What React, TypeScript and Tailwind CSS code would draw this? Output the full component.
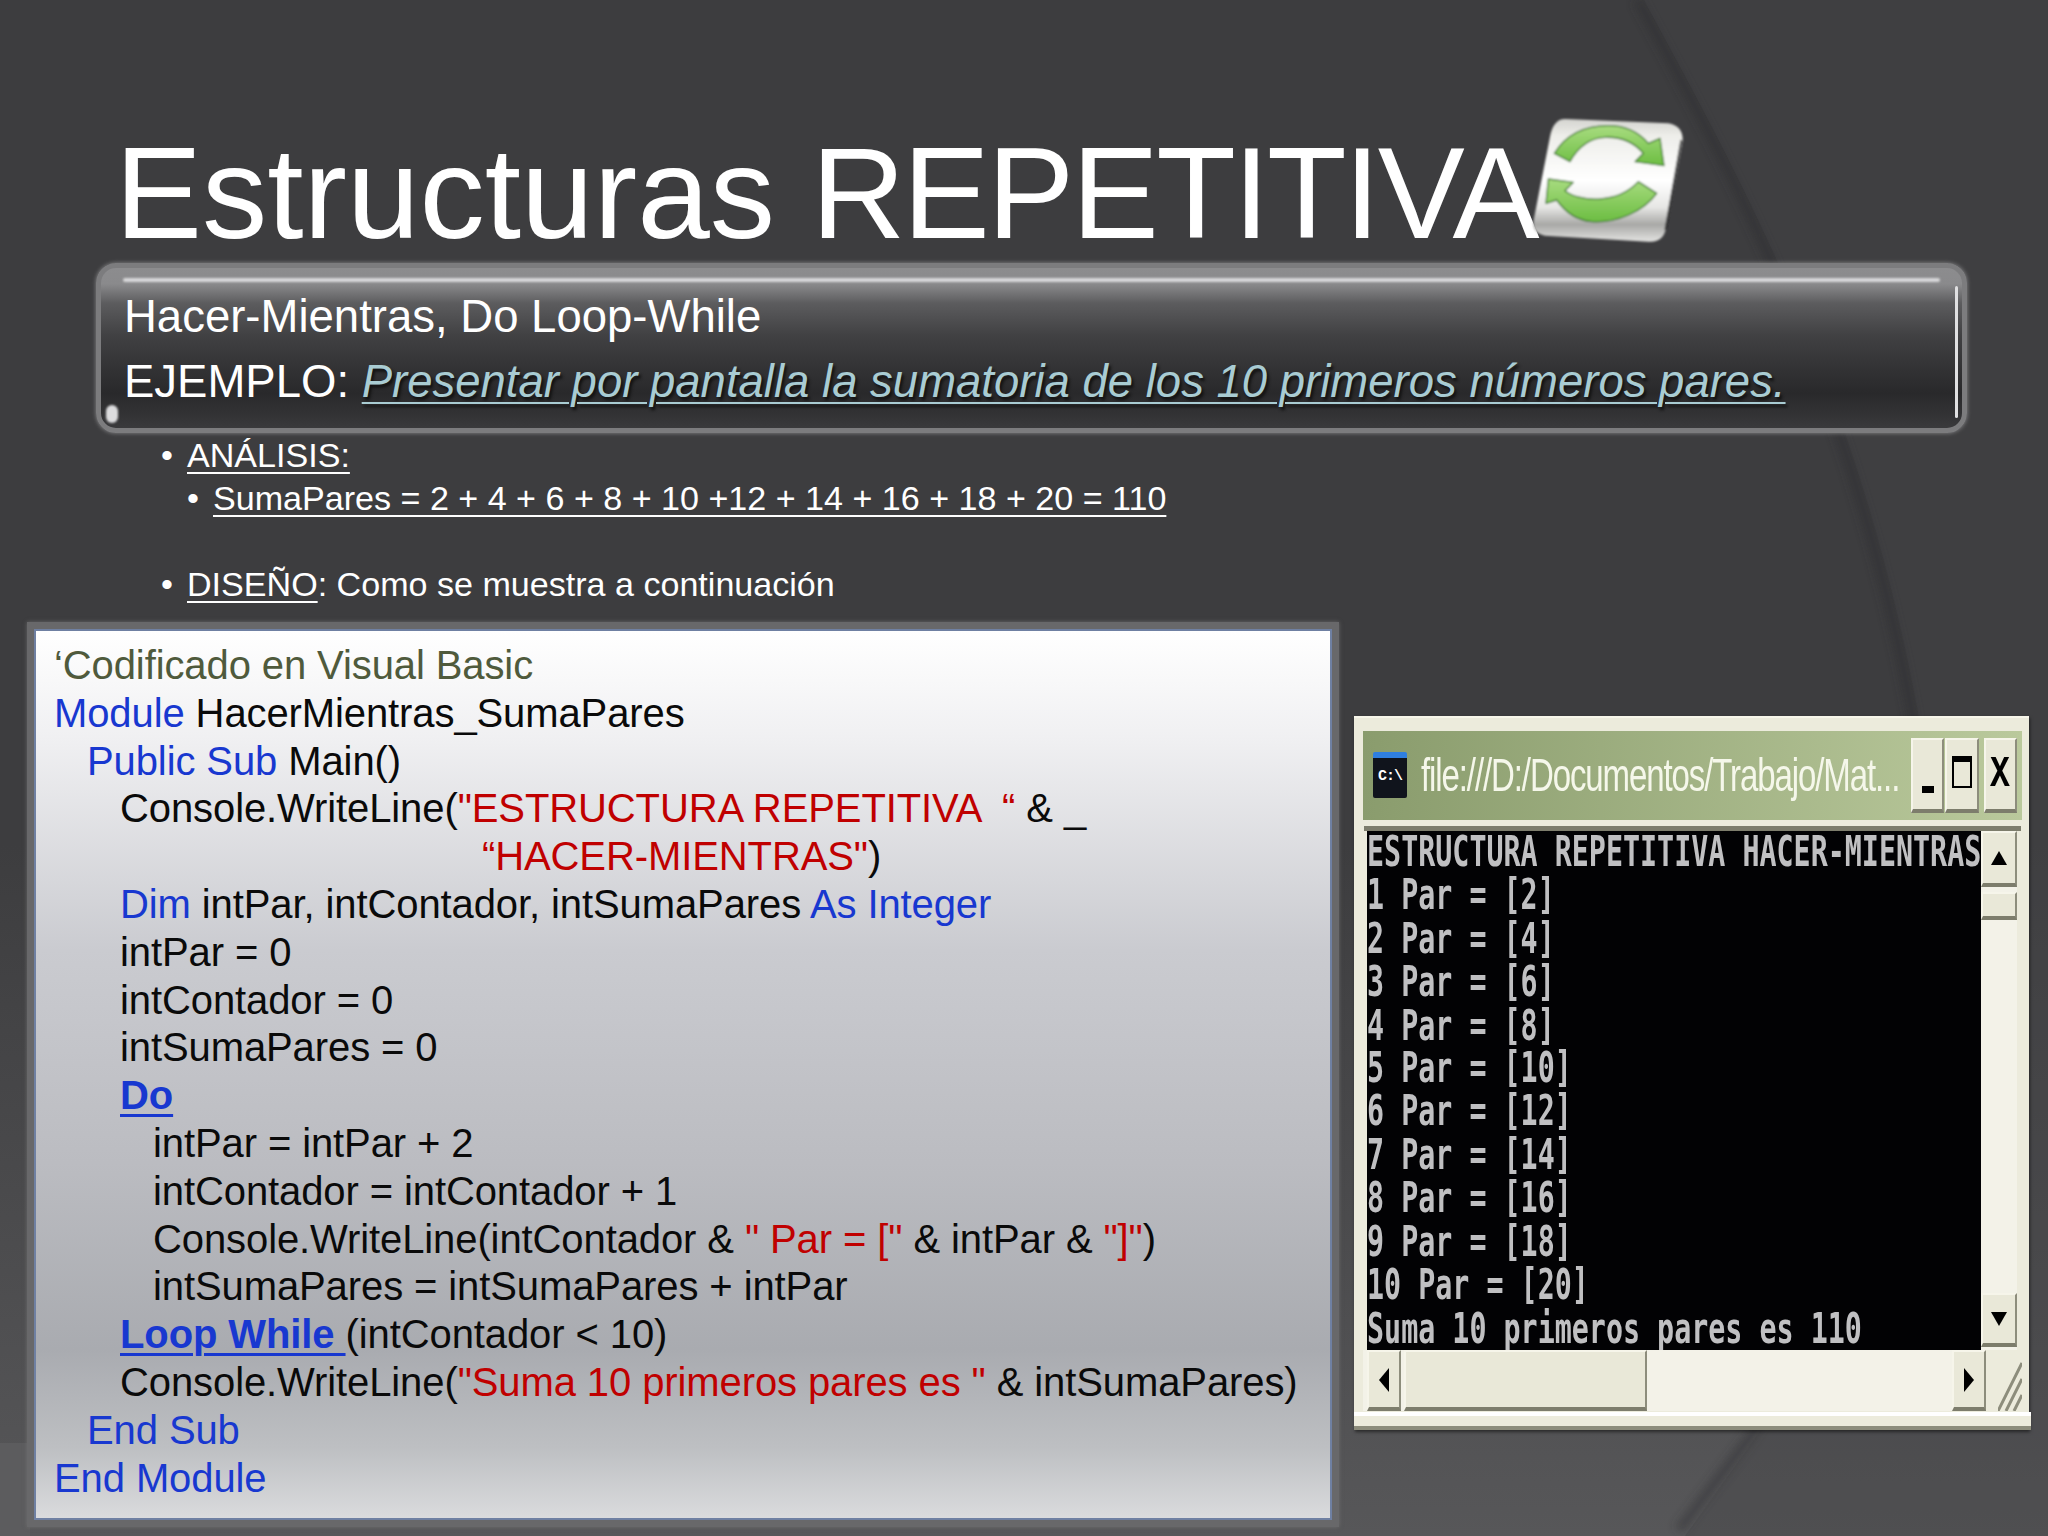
import React from 'react';

const SANS = 'font-["Liberation_Sans",Arial,sans-serif]';

const Kw: React.FC<{ children: React.ReactNode }> = ({ children }) => <span className="text-[#1838d0]">{children}</span>;
const Str: React.FC<{ children: React.ReactNode }> = ({ children }) => <span className="text-[#c00000]">{children}</span>;

const TERMINAL = [
  'ESTRUCTURA REPETITIVA HACER-MIENTRAS',
  '1 Par = [2]',
  '2 Par = [4]',
  '3 Par = [6]',
  '4 Par = [8]',
  '5 Par = [10]',
  '6 Par = [12]',
  '7 Par = [14]',
  '8 Par = [16]',
  '9 Par = [18]',
  '10 Par = [20]',
  'Suma 10 primeros pares es 110',
];

// Backdrop swoosh of the slide theme
const Backdrop = () => (
  <svg className="absolute inset-0" width="2048" height="1536" viewBox="0 0 2048 1536" aria-hidden="true">
    <defs>
      <linearGradient id="pageShade" x1="0" y1="0" x2="0" y2="1">
        <stop offset="0" stopColor="#3d3d3f" />
        <stop offset="0.55" stopColor="#3d3d3f" />
        <stop offset="1" stopColor="#575759" />
      </linearGradient>
      <filter id="soft" x="-10%" y="-10%" width="120%" height="120%">
        <feGaussianBlur stdDeviation="5" />
      </filter>
    </defs>
    <rect width="2048" height="1536" fill="url(#pageShade)" />
    <path
      d="M1638 0 C1730 170 1850 380 1912 712 C1950 1000 1880 1250 1753 1433 L1679 1530"
      fill="none"
      stroke="#2c2c2e"
      strokeWidth="10"
      opacity="0.45"
      filter="url(#soft)"
    />
    <path
      d="M1644 0 C1736 170 1856 380 1918 712 C1956 1000 1886 1250 1759 1433 L1685 1536 L2048 1536 L2048 0 Z"
      fill="#434345"
      opacity="0.4"
    />
    <rect x="0" y="1443" width="30" height="93" fill="#5c5c5e" />
  </svg>
);

// coordinates follow a 3x crop of the tile, so the drawing is 540x450 scaled to 180x150
const RefreshTile = () => (
  <svg className="absolute left-[1520px] top-[105px]" width="180" height="150" viewBox="0 0 540 450" aria-hidden="true">
    <defs>
      <linearGradient id="tile" x1="0" y1="0" x2="0" y2="1">
        <stop offset="0" stopColor="#d4d4d0" />
        <stop offset="0.14" stopColor="#eeeeea" />
        <stop offset="0.5" stopColor="#ffffff" />
        <stop offset="0.72" stopColor="#e6e6e4" />
        <stop offset="0.86" stopColor="#a8a8a6" />
        <stop offset="1" stopColor="#e4e4e2" />
      </linearGradient>
      <linearGradient id="leaf" x1="0" y1="0" x2="0" y2="1">
        <stop offset="0" stopColor="#a8dc80" />
        <stop offset="1" stopColor="#6cbd42" />
      </linearGradient>
      <filter id="tileBlur">
        <feGaussianBlur stdDeviation="3" />
      </filter>
    </defs>
    <g filter="url(#tileBlur)">
      <path d="M135 42 L445 55 Q488 62 488 105 L438 370 Q430 414 385 410 L75 392 Q32 385 42 340 L90 95 Q100 42 135 42 Z" fill="url(#tile)" />
      <path d="M484 105 L436 375" stroke="#262626" strokeWidth="5" fill="none" />
      <path d="M103 145 C140 85 200 62 265 62 C315 62 355 80 385 115 L420 100 L432 182 L345 170 L370 145 C340 110 300 95 255 97 C210 99 175 125 150 170 Z" fill="url(#leaf)" stroke="#3f7a2a" strokeWidth="4" strokeLinejoin="round" />
      <path d="M78 295 L85 222 L160 232 L135 257 C175 290 290 300 355 230 L410 265 C370 320 290 355 215 350 C170 346 135 320 110 285 Z" fill="url(#leaf)" stroke="#3f7a2a" strokeWidth="4" strokeLinejoin="round" />
    </g>
  </svg>
);

const WinButton: React.FC<{ children?: React.ReactNode; className?: string }> = ({ children, className }) => (
  <div className={`flex items-center justify-center bg-[#e9e8d8] border-t-2 border-l-2 border-[#f6f5ea] border-b-4 border-b-[#7d7d6c] border-r-2 border-r-[#8d8d7c] ${className ?? ''}`}>
    {children}
  </div>
);

const ConsoleWindow = () => (
  <div className="mt-[94px] ml-[15px] w-[675px] h-[714px] shrink-0 bg-[#ecebdc] border-t-2 border-[#f7f6ea] shadow-[1px_2px_3px_rgba(0,0,0,0.5)] flex flex-col pt-[13px] pl-[9px] pr-[7px]">
    <div className="h-[89px] shrink-0 flex items-center bg-linear-to-r from-[#8a9c6d] to-[#bac99c] overflow-hidden">
      <div className="ml-[10px] mt-[-2px] w-[34px] h-[46px] bg-[#10141c] rounded-[2px] border-t-[6px] border-[#2f7fe0] flex items-center justify-center shrink-0">
        <span className="font-['Liberation_Mono',monospace] font-bold text-[15px] text-white tracking-[-1px]">C:\</span>
      </div>
      <div className={`${SANS} ml-[14px] w-[484px] shrink-0 whitespace-nowrap text-[33px] leading-[40px] text-[#f5f7ea] scale-y-[1.4] origin-center tracking-[-1.1px]`}>
        file:///D:/Documentos/Trabajo/Mat...
      </div>
      <div className="ml-[6px] flex gap-px h-[75px]">
        <WinButton className="w-[33px] items-end pb-[16px]"><div className="w-[12px] h-[7px] bg-black" /></WinButton>
        <WinButton className="w-[34px]"><div className="w-[20px] h-[32px] border-2 border-t-[6px] border-black mb-[6px]" /></WinButton>
        <WinButton className="ml-[4px] w-[33px]">
          <span className="font-['Liberation_Mono',monospace] font-bold text-[30px] text-black scale-y-[1.5] scale-x-[1.1]">X</span>
        </WinButton>
      </div>
    </div>
    <div className="h-[6px] shrink-0" />
    <div className="h-[5px] shrink-0 ml-[1px] mr-[1px] bg-[#7d7d6c]" />
    <div className="h-[519px] shrink-0 flex pl-[4px]">
      <div className="w-[614px] h-full bg-[#020204] overflow-hidden">
        <div className="font-['DejaVu_Sans_Mono',monospace] text-[28.35px] leading-[28.87px] font-bold text-[#c0c0c2] whitespace-pre scale-y-[1.5] origin-top">
          {TERMINAL.map((line) => (
            <div key={line}>{line}</div>
          ))}
        </div>
      </div>
      <div className="w-[36px] h-full flex flex-col bg-[#f3f2e8]">
        <WinButton className="h-[56px]">
          <svg width="16" height="14" viewBox="0 0 16 14"><path d="M8 0 L16 14 L0 14 Z" fill="#000" /></svg>
        </WinButton>
        <WinButton className="h-[28px] mt-[5px]" />
        <div className="flex-1" />
        <WinButton className="h-[54px] mb-[3px]">
          <svg width="16" height="14" viewBox="0 0 16 14"><path d="M0 0 L16 0 L8 14 Z" fill="#000" /></svg>
        </WinButton>
      </div>
    </div>
    <div className="h-[61px] shrink-0 flex pl-[4px] bg-[#f3f2e8]">
      <WinButton className="w-[34px] h-full">
        <svg width="10" height="24" viewBox="0 0 10 24"><path d="M10 0 L10 24 L0 12 Z" fill="#000" /></svg>
      </WinButton>
      <WinButton className="ml-[3px] w-[243px] h-full" />
      <div className="flex-1" />
      <WinButton className="w-[34px] h-full">
        <svg width="10" height="24" viewBox="0 0 10 24"><path d="M0 0 L10 12 L0 24 Z" fill="#000" /></svg>
      </WinButton>
      <div className="w-[36px] h-full flex items-end justify-end bg-[#ecebdc]">
        <svg width="24" height="56" viewBox="0 0 24 56" aria-hidden="true">
          <path d="M0 56 L24 8 M8 56 L24 24 M16 56 L24 40" stroke="#8d8d7c" strokeWidth="3" fill="none" />
        </svg>
      </div>
    </div>
    <div className="flex-1 border-t-4 border-white -mx-[9px] mt-[1px] bg-[#ecebdc] border-b-4 border-b-[#8d8d7c]" />
  </div>
);

const CodePanel = () => (
  <div className="w-[1312px] h-[905px] shrink-0 border-[7px] border-[#68686a] shadow-[0_0_4px_rgba(120,120,120,0.7)]">
    <div className={`${SANS} h-full border-2 border-[#6f80a2] bg-[linear-gradient(180deg,#ffffff_0%,#f0f0f2_12%,#cacbd0_36%,#bbbcc1_60%,#a9abb0_81%,#bdbfc2_92%,#dadbdd_100%)] pl-[18px] pt-[11px] text-[40px] leading-[47.8px] text-[#0a0a0a] whitespace-pre tracking-[-0.1px]`}>
      <div className="text-[#4f5a3c]">‘Codificado en Visual Basic</div>
      <div><Kw>Module</Kw> HacerMientras_SumaPares</div>
      <div className="pl-[33px]"><Kw>Public Sub</Kw> Main()</div>
      <div className="pl-[66px]">Console.WriteLine(<Str>"ESTRUCTURA REPETITIVA  “</Str> &amp; _</div>
      <div className="pl-[428px]"><Str>“HACER-MIENTRAS"</Str>)</div>
      <div className="pl-[66px]"><Kw>Dim</Kw> intPar, intContador, intSumaPares <Kw>As Integer</Kw></div>
      <div className="pl-[66px]">intPar = 0</div>
      <div className="pl-[66px]">intContador = 0</div>
      <div className="pl-[66px]">intSumaPares = 0</div>
      <div className="pl-[66px] font-bold text-[#1838d0] underline decoration-[3px] underline-offset-[5px]">Do</div>
      <div className="pl-[99px]">intPar = intPar + 2</div>
      <div className="pl-[99px]">intContador = intContador + 1</div>
      <div className="pl-[99px]">Console.WriteLine(intContador &amp; <Str>" Par = ["</Str> &amp; intPar &amp; <Str>"]"</Str>)</div>
      <div className="pl-[99px]">intSumaPares = intSumaPares + intPar</div>
      <div className="pl-[66px]">
        <span className="font-bold text-[#1838d0] underline decoration-[3px] underline-offset-[5px]">Loop While </span>(intContador &lt; 10)
      </div>
      <div className="pl-[66px]">Console.WriteLine(<Str>"Suma 10 primeros pares es "</Str> &amp; intSumaPares)</div>
      <div className="pl-[33px]"><Kw>End Sub</Kw></div>
      <div><Kw>End Module</Kw></div>
    </div>
  </div>
);

export default function App() {
  return (
    <div className={`${SANS} relative w-[2048px] h-[1536px] overflow-hidden text-white`}>
      <Backdrop />
      <div className="relative flex flex-col">
        <div className="h-[263px] pl-[115px] pb-[5px] flex items-end">
          <h1 className="text-[130.5px] leading-none font-normal whitespace-nowrap">
            Estructuras <span className="tracking-[-2.6px]">REPETITIVA</span>
          </h1>
        </div>

        <div className="relative ml-[96px] w-[1871px] h-[170px] rounded-[20px] border-[5px] border-[#7c7c7e] shadow-[0_0_4px_#8a8a8c] bg-[linear-gradient(180deg,#8c8c8e_0%,#8a8a8c_10%,#5c5c5e_22%,#414143_42%,#333335_62%,#29292b_78%,#333335_92%,#3a3a3c_100%)] pl-[23px] pt-[16px] text-[45.5px] leading-[65px] whitespace-nowrap">
          <div className="absolute left-[22px] right-[22px] top-[10px] h-[4px] rounded-full bg-[#d8d8da] blur-[1px]" />
          <div className="absolute right-[4px] top-[18px] bottom-[10px] w-[3px] rounded-full bg-[#e0e0e2]" />
          <div className="absolute left-[5px] bottom-[5px] w-[12px] h-[18px] rounded-full bg-[#dcdcde] blur-[1px]" />
          <div className="relative">Hacer-Mientras, Do Loop-While</div>
          <div className="relative">
            EJEMPLO: <span className="italic text-[#a9ccd3] underline decoration-2 underline-offset-[5px] [text-shadow:2px_3px_3px_#111]">Presentar por pantalla la sumatoria de los 10 primeros números pares.</span>
          </div>
        </div>

        <ul className="pt-[1px] text-[34.1px] leading-[43px] whitespace-nowrap">
          <li className="flex pl-[161px]"><span className="w-[26px]">•</span><span className="underline underline-offset-[5px] decoration-2">ANÁLISIS:</span></li>
          <li className="flex pl-[187px]"><span className="w-[26px]">•</span><span className="underline underline-offset-[5px] decoration-2">SumaPares = 2 + 4 + 6 + 8 + 10 +12 + 14 + 16 + 18 + 20 = 110</span></li>
          <li className="h-[43px]" />
          <li className="flex pl-[161px]"><span className="w-[26px]">•</span><span><span className="underline underline-offset-[5px] decoration-2">DISEÑO</span>: Como se muestra a continuación</span></li>
        </ul>

        <div className="mt-[16px] pl-[27px] flex items-start">
          <CodePanel />
          <ConsoleWindow />
        </div>
      </div>
      <RefreshTile />
    </div>
  );
}
